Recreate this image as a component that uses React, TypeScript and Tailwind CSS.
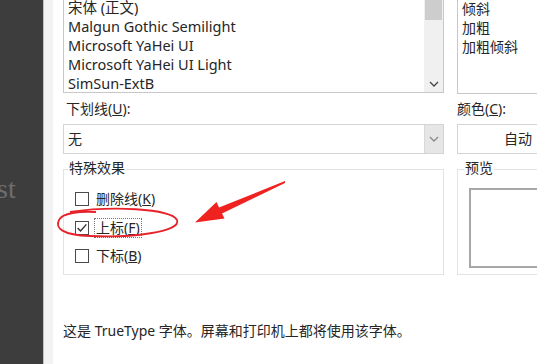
import React from "react";

const fontStack = '"Noto Sans", "Noto Sans CJK SC", sans-serif';

const Chevron: React.FC<{ color?: string }> = ({ color = "#555" }) => (
    <svg width="10" height="6" viewBox="0 0 10 6">
        <path d="M1 1 L5 5 L9 1" fill="none" stroke={color} strokeWidth="1.3" />
    </svg>
);

const CheckRow: React.FC<{ label: string; hot: string; checked?: boolean; focus?: boolean }> = (props) => (
    <div className="flex items-center h-[28.5px]">
        <div className="w-[14px] h-[14px] border border-[#4a4a4a] bg-white flex items-center justify-center">
            {props.checked && (
                <svg width="12" height="12" viewBox="0 0 11 11">
                    <path d="M1.5 5.5 L4.2 8.3 L9.5 2.2" fill="none" stroke="#333" strokeWidth="1.3" />
                </svg>
            )}
        </div>
        <div
            className={
                props.focus
                    ? "ml-[5px] px-[1px] border border-dotted border-[#777] leading-[18px]"
                    : "ml-[7px] leading-[18px]"
            }
        >
            {props.label}(<span className="underline">{props.hot}</span>)
        </div>
    </div>
);

export default function App() {
    const fonts = ["宋体 (正文)", "Malgun Gothic Semilight", "Microsoft YaHei UI", "Microsoft YaHei UI Light", "SimSun-ExtB"];
    const styles = ["倾斜", "加粗", "加粗倾斜"];

    return (
        <div
            className="relative w-[554px] h-[364px] flex overflow-hidden bg-white text-[14px] text-[#262626]"
            style={{ fontFamily: fontStack }}
        >
            {/* dark background window on the left */}
            <div className="w-[43px] bg-[#3d3d3d] overflow-hidden">
                <div className="mt-[168px] ml-[-3px] text-[28px] text-[#6e6e6e]" style={{ fontFamily: '"Liberation Serif", serif' }}>
                    st
                </div>
            </div>
            <div className="w-[1px] bg-[#a9c8e2]" />
            <div className="w-[9px] bg-[#f3f3f3]" />

            <div className="flex-1 pl-[10px] flex flex-col">
                <div className="flex gap-[13px]">
                    {/* left column */}
                    <div className="w-[381px] flex flex-col">
                        <div className="h-[93px] flex border-x border-b border-[#c8c8c8] overflow-hidden">
                            <div className="flex-1 pl-[4px] mt-[-2px] text-[14.5px] leading-[19px] whitespace-nowrap">
                                {fonts.map((f) => (
                                    <div key={f}>{f}</div>
                                ))}
                            </div>
                            <div className="w-[19px] bg-[#f0f0f0] flex flex-col justify-between items-center">
                                <div className="w-[17px] h-[20px] bg-[#cdcdcd]" />
                                <div className="pb-[5px]">
                                    <Chevron color="#444" />
                                </div>
                            </div>
                        </div>
                        <div className="h-[31px] pl-[3px] pt-[7px] leading-[18px]">
                            下划线(<span className="underline">U</span>):
                        </div>
                        <div className="h-[30px] flex border border-[#d4d4d4]">
                            <div className="flex-1 pl-[4px] leading-[28px]">无</div>
                            <div className="w-[19px] bg-[#e6e6e6] border-l border-[#d9d9d9] flex items-center justify-center">
                                <Chevron color="#888" />
                            </div>
                        </div>
                        <div className="mt-[15px] h-[106px] border border-[#e3e3e3] relative">
                            <div className="absolute left-[4px] top-[-11px] bg-white px-[1px] leading-[18px]">特殊效果</div>
                            <div className="pl-[11px] pt-[15px]">
                                <CheckRow label="删除线" hot="K" />
                                <CheckRow label="上标" hot="F" checked focus />
                                <CheckRow label="下标" hot="B" />
                            </div>
                        </div>
                    </div>

                    {/* right column, clipped at its right edge */}
                    <div className="w-[80px] overflow-hidden flex flex-col">
                        <div className="w-[140px] h-[94px] border-x border-b border-[#c8c8c8] pl-[4px] leading-[19px]">
                            {styles.map((s) => (
                                <div key={s} className="first:mt-[-1px]">
                                    {s}
                                </div>
                            ))}
                        </div>
                        <div className="h-[30px] pt-[6px] leading-[18px]">
                            颜色(<span className="underline">C</span>):
                        </div>
                        <div className="w-[140px] h-[30px] border border-[#d4d4d4] pl-[46px] leading-[28px]">自动</div>
                        <div className="mt-[15px] w-[140px] h-[106px] border border-[#e3e3e3] relative">
                            <div className="absolute left-[6px] top-[-11px] bg-white px-[1px] leading-[18px]">预览</div>
                            <div className="ml-[11px] mt-[18px] h-[80px] border-2 border-[#a8a8a8]" />
                        </div>
                    </div>
                </div>

                <div className="mt-[47px] text-[14px] leading-[18px]">这是 TrueType 字体。屏幕和打印机上都将使用该字体。</div>
            </div>

            {/* red annotations */}
            <svg className="absolute left-0 top-0 pointer-events-none" width="554" height="364" viewBox="0 0 554 364">
                <path
                    d="M70 212 C 110 206, 170 208, 177 220 C 182 232, 130 238, 90 236 C 62 235, 55 228, 59 220 C 62 213, 80 211, 96 212"
                    fill="none"
                    stroke="#e8222a"
                    strokeWidth="1.8"
                />
                <polygon
                    points="285,181 219,207.5 216.5,202 195,222.5 224.5,218.5 222,213.5 285,183"
                    fill="#f0221f"
                />
            </svg>
        </div>
    );
}
